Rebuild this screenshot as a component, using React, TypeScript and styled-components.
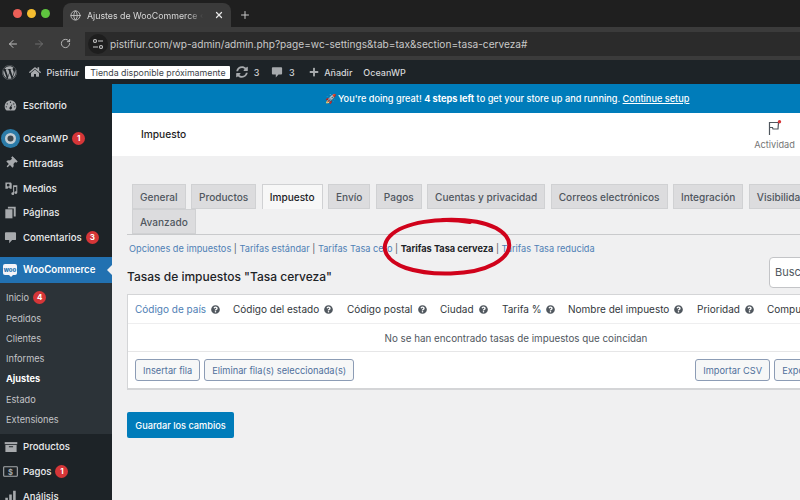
import React from 'react';
import styled, { createGlobalStyle } from 'styled-components';
import { ArrowLeft, ArrowRight, Globe, Plus, RotateCw, X } from 'lucide-react';
import {
  FaHome,
  FaPlus,
  FaQuestionCircle,
  FaSyncAlt,
  FaThumbtack,
  FaWordpress,
} from 'react-icons/fa';

const GlobalStyle = createGlobalStyle`
  html, body {
    margin: 0;
    background: #f0f0f1;
    font-family: Inter, "Liberation Sans", sans-serif;
  }
  * { box-sizing: border-box; }
`;

const Page = styled.div`
  position: relative;
  width: 800px;
  height: 500px;
  overflow: hidden;
  display: flex;
  flex-direction: column;
  background: #f0f0f1;
`;

/* browser chrome */
const TabStrip = styled.div`
  height: 27px;
  flex: none;
  background: #1f1f1f;
  display: flex;
  align-items: flex-end;
  padding-left: 13px;
`;

const Lights = styled.div`
  display: flex;
  gap: 5px;
  align-self: center;
  width: 50px;
`;

const Light = styled.span<{ $color: string }>`
  width: 9px;
  height: 9px;
  border-radius: 50%;
  background: ${(p) => p.$color};
`;

const BrowserTab = styled.div`
  width: 168px;
  height: 24px;
  background: #3a3a3a;
  border-radius: 8px 8px 0 0;
  display: flex;
  align-items: center;
  padding: 0 7px;
  color: #d8d8d8;
  font-size: 8.8px;
  gap: 6px;
`;

const TabTitle = styled.span`
  flex: 1;
  white-space: nowrap;
  overflow: hidden;
  mask-image: linear-gradient(to right, #000 84%, transparent 96%);
`;

const NewTab = styled.div`
  height: 24px;
  margin-left: 8px;
  display: flex;
  align-items: center;
  color: #c8c8c8;
`;

const Toolbar = styled.div`
  height: 33px;
  flex: none;
  background: #3b3b3b;
  display: flex;
  align-items: center;
`;

const NavButton = styled.div<{ $dim?: boolean }>`
  width: 26px;
  display: flex;
  justify-content: center;
  color: ${(p) => (p.$dim ? '#6e6e6e' : '#bdbdbd')};
`;

const Omnibox = styled.div`
  flex: 1;
  height: 24px;
  margin-left: 7px;
  background: #2b2b2b;
  display: flex;
  align-items: center;
  padding-left: 3px;
  color: #c9c9c9;
  font-size: 10.15px;
  white-space: nowrap;
`;

const SitePill = styled.div`
  width: 20px;
  height: 20px;
  border-radius: 50%;
  background: #1e1e1e;
  margin-right: 2px;
  display: flex;
  align-items: center;
  justify-content: center;
`;

/* wp admin bar */
const AdminBar = styled.div`
  height: 24px;
  flex: none;
  background: #1d2327;
  color: #d5d7d9;
  display: flex;
  align-items: center;
  font-size: 9px;
  font-weight: 500;
  white-space: nowrap;
`;

const BarItem = styled.div<{ $left: number }>`
  display: flex;
  align-items: center;
  gap: 5.5px;
  margin-left: ${(p) => p.$left}px;
  svg { color: #a7aaad; }
`;

const ComingSoon = styled.span`
  margin-left: 6px;
  width: 145px;
  background: #fff;
  color: #3c434a;
  font-size: 8.8px;
  font-weight: 400;
  text-align: center;
  height: 13px;
  line-height: 13px;
  border-radius: 1px;
`;

const Body = styled.div`
  flex: 1;
  min-height: 0;
  display: flex;
`;

/* sidebar */
const Sidebar = styled.nav`
  width: 112px;
  flex: none;
  background: #1d2327;
  padding-top: 9px;
`;

const MenuItem = styled.div<{ $gap?: number }>`
  height: 24.6px;
  margin-top: ${(p) => p.$gap ?? 0}px;
  display: flex;
  align-items: center;
  color: #eaebec;
  font-size: 9.6px;
  font-weight: 500;
`;

const MenuIcon = styled.span`
  width: 21px;
  margin-right: 2px;
  flex: none;
  display: flex;
  justify-content: center;
  color: #a7aaad;
`;

const TiltedPin = styled(FaThumbtack)`
  transform: rotate(45deg);
`;

const ActiveItem = styled.div`
  position: relative;
  height: 26px;
  margin-top: 7px;
  background: #2271b1;
  display: flex;
  align-items: center;
  color: #fff;
  font-size: 9.7px;
  font-weight: 600;
`;

const ActiveArrow = styled.span`
  position: absolute;
  right: 0;
  top: 8px;
  width: 0;
  height: 0;
  border: 5px solid transparent;
  border-right-color: #f0f0f1;
  border-left-width: 0;
`;

const WooBubble = styled.span`
  position: relative;
  width: 14px;
  height: 11px;
  margin: -1px 6px 0 3px;
  background: #f4f4f8;
  border-radius: 2px;
  color: #2271b1;
  font-size: 6px;
  font-weight: 800;
  line-height: 11px;
  text-align: center;

  &::after {
    content: '';
    position: absolute;
    left: 6px;
    top: 11px;
    border: 2px solid transparent;
    border-top-color: #f4f4f8;
    border-bottom-width: 0;
  }
`;

const SubMenu = styled.div`
  background: #2c3338;
  padding: 5px 0 4px;
  margin-bottom: 1px;
`;

const SubItem = styled.div<{ $current?: boolean }>`
  height: 20.3px;
  display: flex;
  align-items: center;
  padding-left: 6px;
  font-size: 9.2px;
  color: ${(p) => (p.$current ? '#fff' : '#c3c4c7')};
  font-weight: ${(p) => (p.$current ? 700 : 400)};
`;

const Badge = styled.span`
  width: 13px;
  height: 13px;
  margin-left: 4px;
  border-radius: 50%;
  background: #d63638;
  color: #fff;
  font-size: 8px;
  font-weight: 700;
  line-height: 13px;
  text-align: center;
`;

/* main column */
const Main = styled.main`
  flex: 1;
  min-width: 0;
  overflow: hidden;
`;

const Notice = styled.div`
  width: 790px;
  height: 29px;
  background: #007cba;
  color: #fff;
  font-size: 9.2px;
  font-weight: 500;
  display: flex;
  align-items: center;
  justify-content: center;
  white-space: pre;
  b { font-weight: 700; }
  u { font-weight: 500; }
`;

const WooHeader = styled.div`
  height: 43px;
  background: #fff;
  display: flex;
  align-items: center;
  justify-content: space-between;
  padding-left: 29px;
  font-size: 10.2px;
  font-weight: 500;
  color: #1e1e1e;
`;

const HeaderTitle = styled.span`
  margin-top: -2px;
`;

const Activity = styled.div`
  width: 45px;
  height: 100%;
  margin: 1px 3px 0 0;
  display: flex;
  flex-direction: column;
  align-items: center;
  justify-content: center;
  gap: 3px;
  color: #757575;
  font-size: 9.2px;
  font-weight: 400;
`;

const Content = styled.div`
  width: 793px;
  padding: 28px 0 0 15px;
`;

const Tabs = styled.div`
  display: flex;
  flex-wrap: wrap;
  padding-left: 5px;
  column-gap: 5.4px;
  border-bottom: 1px solid #c9cacc;
  padding-right: 30px;
`;

const Tab = styled.div<{ $active?: boolean }>`
  height: 25px;
  padding: 0 7px;
  flex: none;
  display: flex;
  align-items: center;
  font-size: 10.1px;
  font-weight: 500;
  color: ${(p) => (p.$active ? '#1d2327' : '#50575e')};
  background: ${(p) => (p.$active ? '#f7f7f7' : '#dcdcde')};
  border: 1px solid #d0d1d3;
  border-bottom: ${(p) => (p.$active ? 'none' : '1px solid #d0d1d3')};
`;

const SubLinks = styled.div`
  display: flex;
  align-items: center;
  height: 13px;
  margin: 6px 0 0 2px;
  padding-top: 1px;
  font-size: 9.2px;
  color: #50575e;
  white-space: pre;
`;

const SubLink = styled.span<{ $current?: boolean }>`
  color: ${(p) => (p.$current ? '#1d2327' : '#4f7fb5')};
  font-weight: ${(p) => (p.$current ? 700 : 400)};
`;

const TitleRow = styled.div`
  height: 40px;
  display: flex;
  align-items: center;
  justify-content: space-between;
`;

const Title = styled.h2`
  margin: 0;
  padding-top: 5px;
  font-size: 12px;
  font-weight: 500;
  color: #1d2327;
`;

const SearchBox = styled.div`
  width: 120px;
  height: 31px;
  margin: -4px 16px 0 0;
  background: #fff;
  border: 1px solid #c3c4c7;
  border-radius: 4px;
  padding-left: 5px;
  display: flex;
  align-items: center;
  font-size: 11px;
  color: #50575e;
`;

const TableCard = styled.div`
  background: #fff;
  border: 1px solid #d4d5d7;
  border-bottom-width: 2px;
`;

const HeadRow = styled.div`
  height: 29px;
  display: flex;
  align-items: center;
  border-bottom: 1px solid #eeeeef;
  white-space: nowrap;
`;

const HeadCell = styled.div<{ $width: number; $link?: boolean }>`
  width: ${(p) => p.$width}px;
  flex: none;
  padding-left: 7px;
  display: flex;
  align-items: center;
  gap: 5px;
  font-size: 10px;
  color: ${(p) => (p.$link ? '#4f7fb5' : '#32373c')};
  svg { color: #50575e; }
`;

const EmptyRow = styled.div`
  height: 28px;
  padding-top: 1px;
  display: flex;
  align-items: center;
  justify-content: center;
  border-bottom: 1px solid #e6e6e7;
  font-size: 9.8px;
  color: #50575e;
`;

const ActionRow = styled.div`
  height: 36px;
  display: flex;
  align-items: center;
  padding: 0 55px 0 7px;
  gap: 4px;
`;

const SmallButton = styled.div`
  height: 22px;
  padding: 0 7px;
  display: flex;
  align-items: center;
  background: #f6f7f7;
  border: 1px solid #8c9cb5;
  border-radius: 3px;
  font-size: 9.25px;
  color: #4f6f9b;
  white-space: nowrap;
`;

const Spacer = styled.div`
  flex: 1;
`;

const SaveButton = styled.div`
  width: 107px;
  height: 26px;
  margin-top: 22px;
  background: #007cba;
  border-radius: 2px;
  color: #fff;
  font-size: 9.2px;
  font-weight: 500;
  display: flex;
  align-items: center;
  justify-content: center;
`;

/* hand drawn circle lying over the page */
const Annotation = styled.svg`
  position: absolute;
  left: 380px;
  top: 214px;
  pointer-events: none;
`;

const Dashboard = () => (
  <svg width="13" height="13" viewBox="0 0 20 20" fill="currentColor">
    <path d="M10 2a9 9 0 0 0-9 9c0 2.6 1.1 5 3 6.600h12c1.900-1.600 3-4 3-6.600a9 9 0 0 0-9-9zm0 2a1 1 0 1 1 0 2 1 1 0 0 1 0-2zM5 6.500a1 1 0 1 1 0 2 1 1 0 0 1 0-2zm10 0a1 1 0 1 1 0 2 1 1 0 0 1 0-2zM3.500 11a1 1 0 1 1 0 2 1 1 0 0 1 0-2zm13 0a1 1 0 1 1 0 2 1 1 0 0 1 0-2zM13 7l-1.800 5.100a2 2 0 1 1-2 .1z" />
  </svg>
);

const Media = () => (
  <svg width="14" height="14" viewBox="0 0 20 20" fill="currentColor">
    <path d="M2 2h8l1 2v7H8.500L7 9 5 11H2zm4 2a2 2 0 1 0 0 4 2 2 0 0 0 0-4z" />
    <path d="M13 6h6v10.500a2 2 0 1 1-1.500-1.900V8.500h-3v9.500a2 2 0 1 1-1.500-1.900z" />
  </svg>
);

const Pages = () => (
  <svg width="13" height="13" viewBox="0 0 20 20" fill="currentColor">
    <path d="M6 1h12v15h-3V4H6z" />
    <path d="M2 5h11v14H2z" />
  </svg>
);

const CommentBubble = ({ size }: { size: number }) => (
  <svg width={size} height={size} viewBox="0 0 20 20" fill="currentColor">
    <path d="M3 2h14a1.500 1.500 0 0 1 1.500 1.500v9A1.500 1.500 0 0 1 17 14h-4.500L8 19v-5H3a1.500 1.500 0 0 1-1.500-1.500v-9A1.500 1.500 0 0 1 3 2z" />
  </svg>
);

const Products = () => (
  <svg width="14" height="14" viewBox="0 0 20 20" fill="currentColor">
    <path d="M1 3h18v3H1z" />
    <path d="M2 7h16v10H2zm5 2v1.500h6V9z" />
  </svg>
);

const Payments = () => (
  <svg width="15" height="13" viewBox="0 0 22 18" fill="none" stroke="currentColor" strokeWidth="1.600">
    <rect x="1" y="2" width="20" height="14" rx="1" />
    <text x="11" y="13.500" textAnchor="middle" fontSize="11" fontWeight="700" fill="currentColor" stroke="none" fontFamily="Inter, sans-serif">$</text>
  </svg>
);

const Analytics = () => (
  <svg width="13" height="13" viewBox="0 0 20 20" fill="currentColor">
    <path d="M2 12h4v7H2zM8 7h4v12H8zM14 1h4v18h-4z" />
  </svg>
);

const OceanRing = () => (
  <svg width="19" height="19" viewBox="0 0 19 19">
    <circle cx="9.500" cy="9.500" r="9.500" fill="#2b7ba8" />
    <circle cx="9.500" cy="9.500" r="5.500" fill="#c3ccd2" />
    <circle cx="9.500" cy="9.500" r="3" fill="#3d474e" />
  </svg>
);

const ActivityFlag = () => (
  <svg width="16" height="16" viewBox="0 0 16 16" fill="none" stroke="#50575e" strokeWidth="1.200">
    <path d="M2.500 15V2.500h9L11 9H6l-.5-1.500H2.500" />
    <circle cx="12.500" cy="1.800" r="1.700" fill="#d63638" stroke="none" />
  </svg>
);

const SiteControls = () => (
  <svg width="12" height="12" viewBox="0 0 12 12" fill="none" stroke="#c9c9c9" strokeWidth="1.100">
    <circle cx="3" cy="3" r="1.500" />
    <path d="M6 3h5M1 9h5" />
    <circle cx="9" cy="9" r="1.500" />
  </svg>
);

const tabs = [
  'General',
  'Productos',
  'Impuesto',
  'Envío',
  'Pagos',
  'Cuentas y privacidad',
  'Correos electrónicos',
  'Integración',
  'Visibilidad',
  'Avanzado',
];

const columns: [string, number][] = [
  ['Código de país', 98],
  ['Código del estado', 114],
  ['Código postal', 93],
  ['Ciudad', 62],
  ['Tarifa %', 66],
  ['Nombre del impuesto', 129],
  ['Prioridad', 70],
  ['Compuesto', 90],
];

export default function App() {
  return (
    <Page>
      <GlobalStyle />
      <TabStrip>
        <Lights>
          <Light $color="#ec5f57" />
          <Light $color="#f5bd2f" />
          <Light $color="#5fc53f" />
        </Lights>
        <BrowserTab>
          <Globe size={11} color="#bdbdbd" />
          <TabTitle>Ajustes de WooCommerce ‹ P</TabTitle>
          <X size={10} strokeWidth={3} color="#e6e6e6" />
        </BrowserTab>
        <NewTab>
          <Plus size={12} strokeWidth={2} />
        </NewTab>
      </TabStrip>

      <Toolbar>
        <NavButton>
          <ArrowLeft size={12} />
        </NavButton>
        <NavButton $dim>
          <ArrowRight size={12} />
        </NavButton>
        <NavButton>
          <RotateCw size={11} />
        </NavButton>
        <Omnibox>
          <SitePill>
            <SiteControls />
          </SitePill>
          pistifiur.com/wp-admin/admin.php?page=wc-settings&amp;tab=tax&amp;section=tasa-cerveza#
        </Omnibox>
      </Toolbar>

      <AdminBar>
        <BarItem $left={2}>
          <FaWordpress size={15} />
        </BarItem>
        <BarItem $left={12}>
          <FaHome size={12} />
          Pistifiur
        </BarItem>
        <ComingSoon>Tienda disponible próximamente</ComingSoon>
        <BarItem $left={6}>
          <FaSyncAlt size={12} />
          3
        </BarItem>
        <BarItem $left={12}>
          <CommentBubble size={12} />
          3
        </BarItem>
        <BarItem $left={14}>
          <FaPlus size={10} />
          Añadir
        </BarItem>
        <BarItem $left={11}>OceanWP</BarItem>
      </AdminBar>

      <Body>
        <Sidebar>
          <MenuItem>
            <MenuIcon>
              <Dashboard />
            </MenuIcon>
            Escritorio
          </MenuItem>
          <MenuItem $gap={9}>
            <MenuIcon>
              <OceanRing />
            </MenuIcon>
            OceanWP
            <Badge>1</Badge>
          </MenuItem>
          <MenuItem>
            <MenuIcon>
              <TiltedPin size={12} />
            </MenuIcon>
            Entradas
          </MenuItem>
          <MenuItem>
            <MenuIcon>
              <Media />
            </MenuIcon>
            Medios
          </MenuItem>
          <MenuItem>
            <MenuIcon>
              <Pages />
            </MenuIcon>
            Páginas
          </MenuItem>
          <MenuItem>
            <MenuIcon>
              <CommentBubble size={13} />
            </MenuIcon>
            Comentarios
            <Badge>3</Badge>
          </MenuItem>
          <ActiveItem>
            <WooBubble>woo</WooBubble>
            WooCommerce
            <ActiveArrow />
          </ActiveItem>
          <SubMenu>
            <SubItem>
              Inicio
              <Badge>4</Badge>
            </SubItem>
            <SubItem>Pedidos</SubItem>
            <SubItem>Clientes</SubItem>
            <SubItem>Informes</SubItem>
            <SubItem $current>Ajustes</SubItem>
            <SubItem>Estado</SubItem>
            <SubItem>Extensiones</SubItem>
          </SubMenu>
          <MenuItem>
            <MenuIcon>
              <Products />
            </MenuIcon>
            Productos
          </MenuItem>
          <MenuItem>
            <MenuIcon>
              <Payments />
            </MenuIcon>
            Pagos
            <Badge>1</Badge>
          </MenuItem>
          <MenuItem>
            <MenuIcon>
              <Analytics />
            </MenuIcon>
            Análisis
          </MenuItem>
        </Sidebar>

        <Main>
          <Notice>
            🚀 You're doing great! <b>4 steps left</b> to get your store up and running. <u>Continue setup</u>
          </Notice>
          <WooHeader>
            <HeaderTitle>Impuesto</HeaderTitle>
            <Activity>
              <ActivityFlag />
              Actividad
            </Activity>
          </WooHeader>
          <Content>
            <Tabs>
              {tabs.map((tab) => (
                <Tab key={tab} $active={tab === 'Impuesto'}>
                  {tab}
                </Tab>
              ))}
            </Tabs>
            <SubLinks>
              <SubLink>Opciones de impuestos</SubLink> | <SubLink>Tarifas estándar</SubLink> |{' '}
              <SubLink>Tarifas Tasa cero</SubLink> | <SubLink $current>Tarifas Tasa cerveza</SubLink> |{' '}
              <SubLink>Tarifas Tasa reducida</SubLink>
            </SubLinks>
            <TitleRow>
              <Title>Tasas de impuestos "Tasa cerveza"</Title>
              <SearchBox>Buscar</SearchBox>
            </TitleRow>
            <TableCard>
              <HeadRow>
                {columns.map(([label, width], i) => (
                  <HeadCell key={label} $width={width} $link={i === 0}>
                    {label}
                    <FaQuestionCircle size={9} />
                  </HeadCell>
                ))}
              </HeadRow>
              <EmptyRow>No se han encontrado tasas de impuestos que coincidan</EmptyRow>
              <ActionRow>
                <SmallButton>Insertar fila</SmallButton>
                <SmallButton>Eliminar fila(s) seleccionada(s)</SmallButton>
                <Spacer />
                <SmallButton>Importar CSV</SmallButton>
                <SmallButton>Exportar CSV</SmallButton>
              </ActionRow>
            </TableCard>
            <SaveButton>Guardar los cambios</SaveButton>
          </Content>
        </Main>
      </Body>

      <Annotation width="140" height="66" viewBox="0 0 140 66" fill="none">
        <path
          d="M90 8C60 3 24 8 10 22C-1 34 6 47 26 54C50 62 92 62 114 50C134 39 134 24 116 14C102 7 84 5 62 6"
          stroke="#d0021b"
          strokeWidth="4"
          strokeLinecap="round"
        />
      </Annotation>
    </Page>
  );
}
